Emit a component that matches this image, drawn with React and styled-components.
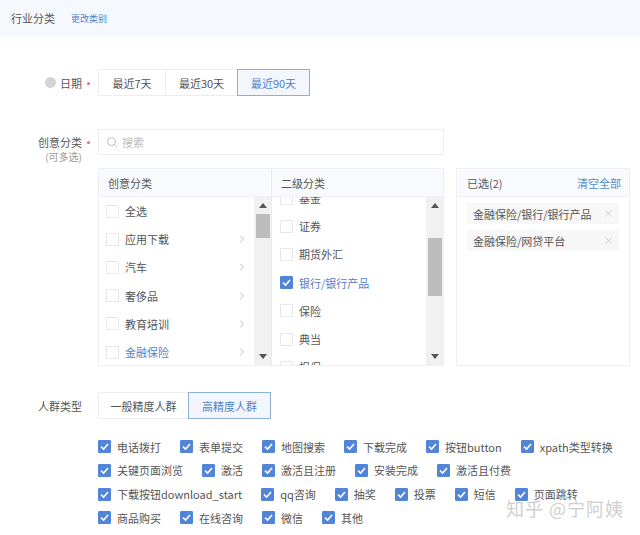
import React from 'react';
import styled, { createGlobalStyle } from 'styled-components';
import { Search, ChevronRight, X } from 'lucide-react';

const GlobalStyle = createGlobalStyle`
  body {
    margin: 0;
    background: #fff;
    font-family: "Noto Sans CJK SC", "Noto Sans", sans-serif;
    color: #555;
  }
`;

const firstList = [
  { name: '全选' },
  { name: '应用下载', more: true },
  { name: '汽车', more: true },
  { name: '奢侈品', more: true },
  { name: '教育培训', more: true },
  { name: '金融保险', more: true, active: true },
];

const secondList = [
  { name: '基金' },
  { name: '证券' },
  { name: '期货外汇' },
  { name: '银行/银行产品', active: true, checked: true },
  { name: '保险' },
  { name: '典当' },
  { name: '担保' },
];

const audienceRows = [
  ['电话拨打', '表单提交', '地图搜索', '下载完成', '按钮button', 'xpath类型转换'],
  ['关键页面浏览', '激活', '激活且注册', '安装完成', '激活且付费'],
  ['下载按钮download_start', 'qq咨询', '抽奖', '投票', '短信', '页面跳转'],
  ['商品购买', '在线咨询', '微信', '其他'],
];

const CheckBox = ({ checked }) => (
  <Box $checked={checked}>
    {checked && (
      <svg width="11" height="11" viewBox="0 0 11 11" fill="none">
        <path d="M2 5.6 L4.6 8 L9 3" stroke="#fff" strokeWidth="1.6" />
      </svg>
    )}
  </Box>
);

const ScrollBar = ({ offset, size }) => (
  <Track>
    <Arrow>
      <svg width="8" height="5" viewBox="0 0 8 5"><path d="M4 0 L8 5 L0 5 Z" fill="#555" /></svg>
    </Arrow>
    <Thumb $offset={offset} $size={size} />
    <Arrow $end>
      <svg width="8" height="5" viewBox="0 0 8 5"><path d="M0 0 L8 0 L4 5 Z" fill="#555" /></svg>
    </Arrow>
  </Track>
);

const App = () => (
  <Page>
    <GlobalStyle />
    <TopBar>
      <TopTitle>行业分类</TopTitle>
      <TopLink>更改类别</TopLink>
    </TopBar>

    <DateRow>
      <Label>
        <HelpDot />
        日期
        <Required />
      </Label>
      <Segments>
        <Segment $w={68}>最近7天</Segment>
        <Segment $w={73} $joined>最近30天</Segment>
        <Segment $w={73} $joined $active>最近90天</Segment>
      </Segments>
    </DateRow>

    <SearchRow>
      <Label>
        创意分类
        <Required />
        <SubLabel>(可多选)</SubLabel>
      </Label>
      <SearchBox>
        <Search size={12} color="#bbb" />
        <span>搜索</span>
      </SearchBox>
    </SearchRow>

    <PanelRow>
      <Picker>
        <PickerColumn $w={173}>
          <ColumnHead>创意分类</ColumnHead>
          <ColumnBody>
            <Options>
              {firstList.map((item) => (
                <Option key={item.name} $active={item.active}>
                  <CheckBox />
                  <OptionName>{item.name}</OptionName>
                  {item.more && <ChevronRight size={12} color="#bbb" />}
                </Option>
              ))}
            </Options>
            <ScrollBar offset={0} size={24} />
          </ColumnBody>
        </PickerColumn>
        <PickerColumn $w={173} $divided>
          <ColumnHead>二级分类</ColumnHead>
          <ColumnBody>
            <Options $scrolled>
              {secondList.map((item) => (
                <Option key={item.name} $active={item.active}>
                  <CheckBox checked={item.checked} />
                  <OptionName>{item.name}</OptionName>
                </Option>
              ))}
            </Options>
            <ScrollBar offset={24} size={58} />
          </ColumnBody>
        </PickerColumn>
      </Picker>

      <Selected>
        <SelectedHead>
          <span>已选(2)</span>
          <ClearLink>清空全部</ClearLink>
        </SelectedHead>
        <Tags>
          <Tag>金融保险/银行/银行产品<X size={11} color="#aaa" strokeWidth={1.2} /></Tag>
          <Tag>金融保险/网贷平台<X size={11} color="#aaa" strokeWidth={1.2} /></Tag>
        </Tags>
      </Selected>
    </PanelRow>

    <AudienceRow>
      <Label>人群类型</Label>
      <Segments>
        <Segment $w={91}>一般精度人群</Segment>
        <Segment $w={83} $joined $active>高精度人群</Segment>
      </Segments>
    </AudienceRow>

    <Conversions>
      {audienceRows.map((row) => (
        <ConversionRow key={row[0]}>
          {row.map((name) => (
            <Conversion key={name}>
              <CheckBox checked />
              {name}
            </Conversion>
          ))}
        </ConversionRow>
      ))}
    </Conversions>

    <Watermark>知乎 @宁阿姨</Watermark>
  </Page>
);

const Page = styled.div`
  position: relative;
  width: 640px;
  height: 535px;
  overflow: hidden;
  font-size: 11px;
`;

const TopBar = styled.div`
  height: 36px;
  padding-left: 11px;
  display: flex;
  align-items: center;
  gap: 16px;
  background: #f5f8fd;
`;

const TopTitle = styled.span`
  font-size: 11px;
  color: #555;
`;

const TopLink = styled.span`
  font-size: 9px;
  color: #4f7fcb;
`;

const FormRow = styled.div`
  display: flex;
  align-items: center;
`;

const DateRow = styled(FormRow)`
  margin-top: 33px;
`;

const SearchRow = styled(FormRow)`
  margin-top: 33px;
`;

const AudienceRow = styled(FormRow)`
  margin-top: 26px;
`;

const Label = styled.div`
  position: relative;
  width: 82px;
  margin-right: 16px;
  display: flex;
  align-items: center;
  justify-content: flex-end;
  font-size: 11px;
  color: #555;
`;

const Required = styled.i`
  position: absolute;
  right: -8px;
  top: 50%;
  width: 3px;
  height: 3px;
  margin-top: -1px;
  border-radius: 50%;
  background: #e0707f;
`;

const SubLabel = styled.span`
  position: absolute;
  right: 0;
  top: 16px;
  font-size: 10px;
  line-height: 14px;
  color: #999;
  white-space: nowrap;
`;

const HelpDot = styled.i`
  width: 11px;
  height: 11px;
  margin-right: 4px;
  border-radius: 50%;
  background: #d4d4d4;
`;

const Segments = styled.div`
  display: flex;
`;

const Segment = styled.div`
  position: relative;
  z-index: ${(p) => (p.$active ? 1 : 0)};
  flex: none;
  box-sizing: border-box;
  width: ${(p) => p.$w}px;
  height: 27px;
  margin-left: ${(p) => (p.$joined ? '-1px' : '0')};
  display: flex;
  align-items: center;
  justify-content: center;
  font-size: 11px;
  color: ${(p) => (p.$active ? '#4f7fcb' : '#555')};
  background: ${(p) => (p.$active ? '#f3f7fd' : '#fff')};
  border: 1px solid ${(p) => (p.$active ? '#8fb0d6' : '#ebedf0')};
`;

const SearchBox = styled.div`
  box-sizing: border-box;
  width: 346px;
  height: 26px;
  padding-left: 7px;
  display: flex;
  align-items: center;
  gap: 4px;
  border: 1px solid #ebedf0;
  font-size: 11px;
  color: #bbb;
`;

const PanelRow = styled.div`
  margin: 13px 0 0 98px;
  display: flex;
  gap: 12px;
`;

const Picker = styled.div`
  display: flex;
  box-sizing: border-box;
  width: 346px;
  height: 198px;
  border: 1px solid #eef0f3;
`;

const PickerColumn = styled.div`
  width: ${(p) => p.$w - (p.$divided ? 1 : 0)}px;
  display: flex;
  flex-direction: column;
  min-height: 0;
  border-left: ${(p) => (p.$divided ? '1px solid #e8ebf0' : '0')};
`;

const ColumnHead = styled.div`
  flex: none;
  height: 27px;
  padding-left: 9px;
  display: flex;
  align-items: center;
  background: #f8fafd;
  border-bottom: 1px solid #eef0f3;
  font-size: 11px;
  color: #555;
`;

const ColumnBody = styled.div`
  flex: 1;
  min-height: 0;
  display: flex;
  overflow: hidden;
`;

const Options = styled.div`
  flex: 1;
  min-width: 0;
  margin-top: ${(p) => (p.$scrolled ? '-13px' : '0')};
  padding-left: ${(p) => (p.$scrolled ? '8px' : '7px')};
  padding-right: 6px;
`;

const Option = styled.div`
  height: 28.2px;
  display: flex;
  align-items: center;
  gap: 6px;
  font-size: 11px;
  color: ${(p) => (p.$active ? '#4f7fcb' : '#555')};
`;

const OptionName = styled.span`
  flex: 1;
  white-space: nowrap;
`;

const Box = styled.span`
  flex: none;
  box-sizing: border-box;
  width: 13px;
  height: 13px;
  display: inline-flex;
  align-items: center;
  justify-content: center;
  border-radius: 1px;
  background: ${(p) => (p.$checked ? '#5285d8' : '#fff')};
  border: 1px solid ${(p) => (p.$checked ? '#5285d8' : '#e6e6e6')};
`;

const Track = styled.div`
  flex: none;
  width: 17px;
  display: flex;
  flex-direction: column;
  align-items: center;
  background: #f1f1f1;
`;

const Arrow = styled.div`
  flex: none;
  height: 17px;
  margin-top: ${(p) => (p.$end ? 'auto' : '0')};
  display: flex;
  align-items: center;
`;

const Thumb = styled.div`
  flex: none;
  width: 14px;
  height: ${(p) => p.$size}px;
  margin-top: ${(p) => p.$offset}px;
  background: #bcbcbc;
`;

const Selected = styled.div`
  box-sizing: border-box;
  width: 174px;
  height: 198px;
  border: 1px solid #eef0f3;
`;

const SelectedHead = styled.div`
  height: 27px;
  padding: 0 8px 0 10px;
  display: flex;
  align-items: center;
  justify-content: space-between;
  background: #f8fafd;
  border-bottom: 1px solid #eef0f3;
  font-size: 11px;
`;

const ClearLink = styled.span`
  color: #4f8fd0;
`;

const Tags = styled.div`
  padding: 6px 10px 0 10px;
  display: flex;
  flex-direction: column;
  gap: 6px;
`;

const Tag = styled.div`
  height: 21px;
  padding: 0 5px 0 6px;
  display: flex;
  align-items: center;
  justify-content: space-between;
  background: #f7f7f7;
  font-size: 11px;
  color: #555;
`;

const Conversions = styled.div`
  margin: 16px 0 0 98px;
`;

const ConversionRow = styled.div`
  height: 23.67px;
  display: flex;
  align-items: center;
  gap: 19px;
`;

const Conversion = styled.div`
  display: flex;
  align-items: center;
  gap: 6px;
  font-size: 11px;
  color: #555;
  white-space: nowrap;
`;

const Watermark = styled.div`
  position: absolute;
  left: 506px;
  top: 495px;
  font-size: 18px;
  letter-spacing: 1px;
  line-height: 26px;
  color: #cfcfcf;
  white-space: nowrap;
`;

export default App;
